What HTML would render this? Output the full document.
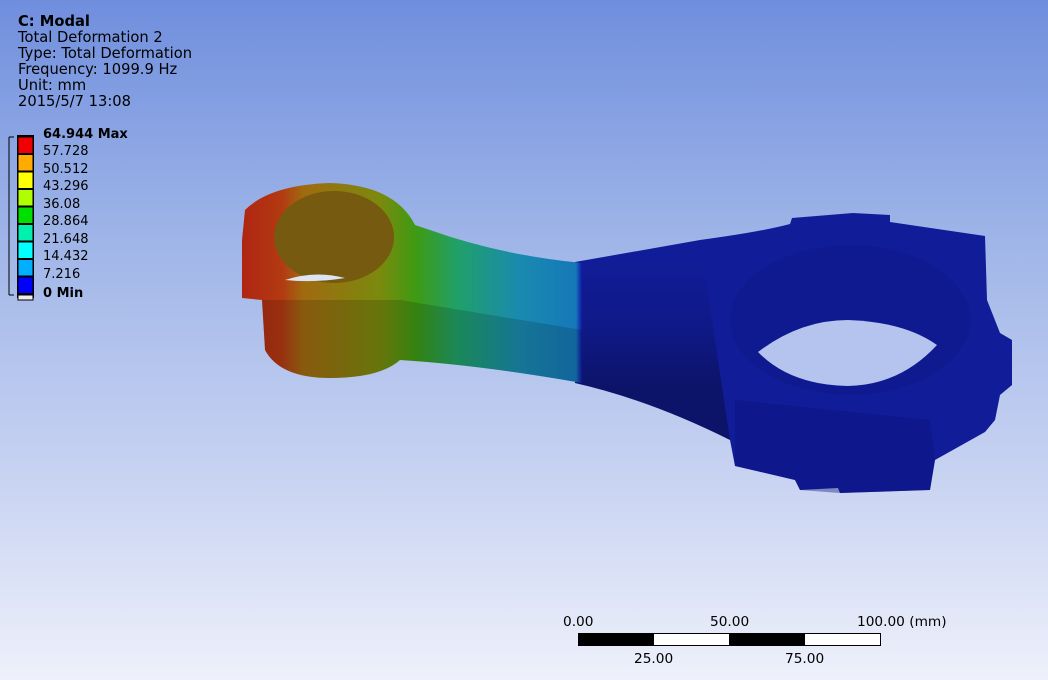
<!DOCTYPE html>
<html><head><style>
body{margin:0;width:1048px;height:680px;overflow:hidden;font-family:Tahoma,"DejaVu Sans","Liberation Sans",sans-serif;}
#bg{position:absolute;left:0;top:0;width:1048px;height:680px;background:linear-gradient(#6f8edd 0%,#9fb5e8 35%,#c8d3f2 70%,#eef1fb 100%);}
.t{position:absolute;left:18px;font-size:14.7px;color:#000;line-height:16px;white-space:nowrap;}
.lg{position:absolute;left:43px;font-size:13px;line-height:16px;}
.s{position:absolute;font-size:13.7px;}
</style></head><body>
<div id="bg"></div>
<div class="t" style="top:14px"><b>C: Modal</b><br>Total Deformation 2<br>Type: Total Deformation<br>Frequency: 1099.9 Hz<br>Unit: mm<br>2015/5/7 13:08</div>
<svg style="position:absolute;left:0;top:0" width="1048" height="680">
<defs>
<linearGradient id="g" x1="240" x2="590" y1="0" y2="0" gradientUnits="userSpaceOnUse">
<stop offset="0" stop-color="#b02412"/><stop offset="0.12" stop-color="#b23a12"/><stop offset="0.18" stop-color="#a06a10"/><stop offset="0.4" stop-color="#7a8a0e"/><stop offset="0.5" stop-color="#3f9a12"/><stop offset="0.62" stop-color="#20a068"/><stop offset="0.8" stop-color="#1a8ab0"/><stop offset="0.96" stop-color="#1578b8"/><stop offset="0.975" stop-color="#1020a8"/><stop offset="1" stop-color="#1020a8"/>
</linearGradient>
<linearGradient id="sh" x1="0" x2="0" y1="260" y2="385" gradientUnits="userSpaceOnUse">
<stop offset="0" stop-color="#000" stop-opacity="0"/><stop offset="0.5" stop-color="#000" stop-opacity="0.1"/><stop offset="1" stop-color="#000" stop-opacity="0.3"/>
</linearGradient>
</defs>
<g stroke="#000" stroke-width="1">
<line x1="9" y1="137" x2="9" y2="295"/><line x1="9" y1="137" x2="14" y2="137"/><line x1="9" y1="295" x2="14" y2="295"/>
<rect x="17.5" y="135.5" width="16" height="162" fill="#000"/>
<rect x="18" y="137" width="15" height="16.5" fill="#f00000"/>
<rect x="18" y="154.5" width="15" height="16.5" fill="#ffab00"/>
<rect x="18" y="172" width="15" height="16.5" fill="#ffff00"/>
<rect x="18" y="189.5" width="15" height="16.5" fill="#b0ff00"/>
<rect x="18" y="207" width="15" height="16.5" fill="#00e000"/>
<rect x="18" y="224.5" width="15" height="16.5" fill="#00f0b0"/>
<rect x="18" y="242" width="15" height="16.5" fill="#00ffff"/>
<rect x="18" y="259.5" width="15" height="16.5" fill="#00b0ff"/>
<rect x="18" y="277" width="15" height="16.5" fill="#0000ff"/>
<rect x="18" y="295" width="15" height="5" fill="#eee"/>
</g>
<path d="M575,262 L700,240 Q760,232 790,224 L792,218 L853,213 L890,215 L890,222 L985,236 L987,300 L1000,333 L1012,340 L1012,385 L1000,395 L995,420 L985,432 L935,460 L930,490 L840,493 L838,488 L800,490 L795,480 L735,466 L730,440 Q650,400 575,383 Z" fill="#111c98"/>
<path d="M575,262 L700,240 L730,440 Q650,400 575,383 Z" fill="url(#sh)"/>
<path d="M735,400 L930,420 L935,460 L930,490 L840,493 L800,490 L795,480 L735,466 Z" fill="#0a1278" opacity="0.4"/>
<ellipse cx="850" cy="320" rx="120" ry="75" fill="#0d178a" opacity="0.5"/>
<path d="M758,352 Q800,320 848,320 Q905,322 937,345 Q900,385 848,386 Q790,385 758,352 Z" fill="#b5c4ee"/>
<path d="M242,240 L245,210 Q270,185 330,183 Q395,185 415,225 L430,230 Q500,255 582,263 L582,383 Q480,365 400,360 Q380,378 330,378 Q280,378 265,350 L262,300 L242,298 Z" fill="url(#g)"/>
<path d="M262,300 Q330,300 400,300 L582,330 L582,383 Q480,365 400,360 Q380,378 330,378 Q280,378 265,350 Z" fill="#000" opacity="0.15"/>
<ellipse cx="334" cy="237" rx="60" ry="46" fill="#8a6a12"/>
<ellipse cx="334" cy="237" rx="60" ry="46" fill="#000" opacity="0.15"/>
<path d="M285,280 Q315,270 345,278 Q315,283 285,280 Z" fill="#dde4f6"/>
<rect x="578.5" y="633.5" width="302" height="12" fill="#fff" stroke="#000" stroke-width="1"/>
<rect x="578" y="633" width="76" height="12" fill="#000"/>
<rect x="729" y="633" width="76" height="12" fill="#000"/>
</svg>
<div class="lg" style="top:127px"><b>64.944 Max</b></div>
<div class="lg" style="top:144px">57.728</div>
<div class="lg" style="top:162px">50.512</div>
<div class="lg" style="top:179px">43.296</div>
<div class="lg" style="top:197px">36.08</div>
<div class="lg" style="top:214px">28.864</div>
<div class="lg" style="top:232px">21.648</div>
<div class="lg" style="top:249px">14.432</div>
<div class="lg" style="top:267px">7.216</div>
<div class="lg" style="top:286px"><b>0 Min</b></div>
<div class="s" style="left:563px;top:614px">0.00</div>
<div class="s" style="left:710px;top:614px">50.00</div>
<div class="s" style="left:857px;top:614px">100.00 (mm)</div>
<div class="s" style="left:634px;top:651px">25.00</div>
<div class="s" style="left:785px;top:651px">75.00</div>
</body></html>
